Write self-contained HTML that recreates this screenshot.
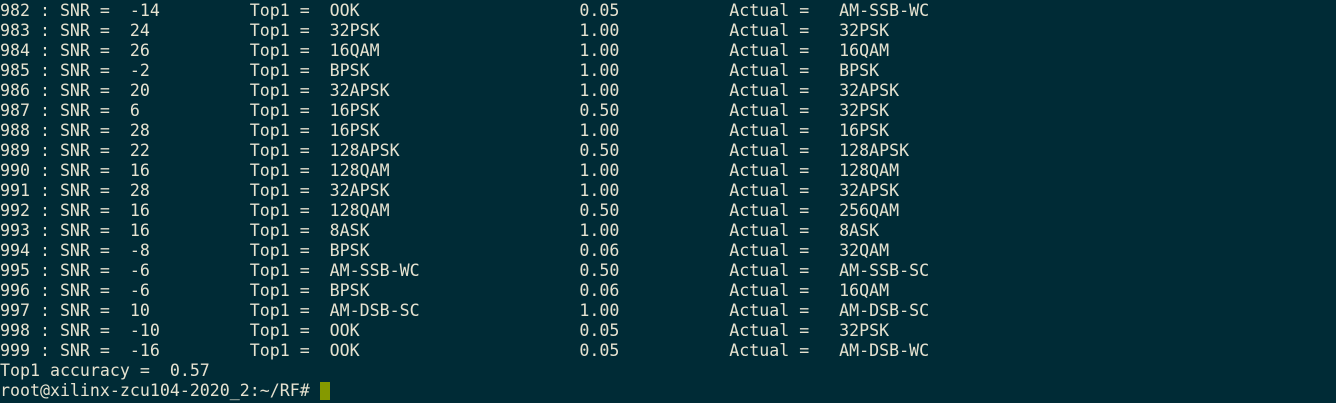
<!DOCTYPE html><html><head><style>
html,body{margin:0;background:#002b36;width:1336px;height:403px;overflow:hidden}
pre{margin:0;padding:0;position:absolute;left:0;top:1px;font-family:"DejaVu Sans Mono","Liberation Mono",monospace;font-size:16.6px;line-height:20px;color:#e6e2d0;white-space:pre}
.c{display:inline-block;width:10px;height:18px;background:#859900;vertical-align:-4px}
</style></head><body><pre>982 : SNR =  -14         Top1 =  OOK                      0.05           Actual =   AM-SSB-WC
983 : SNR =  24          Top1 =  32PSK                    1.00           Actual =   32PSK
984 : SNR =  26          Top1 =  16QAM                    1.00           Actual =   16QAM
985 : SNR =  -2          Top1 =  BPSK                     1.00           Actual =   BPSK
986 : SNR =  20          Top1 =  32APSK                   1.00           Actual =   32APSK
987 : SNR =  6           Top1 =  16PSK                    0.50           Actual =   32PSK
988 : SNR =  28          Top1 =  16PSK                    1.00           Actual =   16PSK
989 : SNR =  22          Top1 =  128APSK                  0.50           Actual =   128APSK
990 : SNR =  16          Top1 =  128QAM                   1.00           Actual =   128QAM
991 : SNR =  28          Top1 =  32APSK                   1.00           Actual =   32APSK
992 : SNR =  16          Top1 =  128QAM                   0.50           Actual =   256QAM
993 : SNR =  16          Top1 =  8ASK                     1.00           Actual =   8ASK
994 : SNR =  -8          Top1 =  BPSK                     0.06           Actual =   32QAM
995 : SNR =  -6          Top1 =  AM-SSB-WC                0.50           Actual =   AM-SSB-SC
996 : SNR =  -6          Top1 =  BPSK                     0.06           Actual =   16QAM
997 : SNR =  10          Top1 =  AM-DSB-SC                1.00           Actual =   AM-DSB-SC
998 : SNR =  -10         Top1 =  OOK                      0.05           Actual =   32PSK
999 : SNR =  -16         Top1 =  OOK                      0.05           Actual =   AM-DSB-WC
Top1 accuracy =  0.57
root@xilinx-zcu104-2020_2:~/RF# <span class="c"></span></pre></body></html>
